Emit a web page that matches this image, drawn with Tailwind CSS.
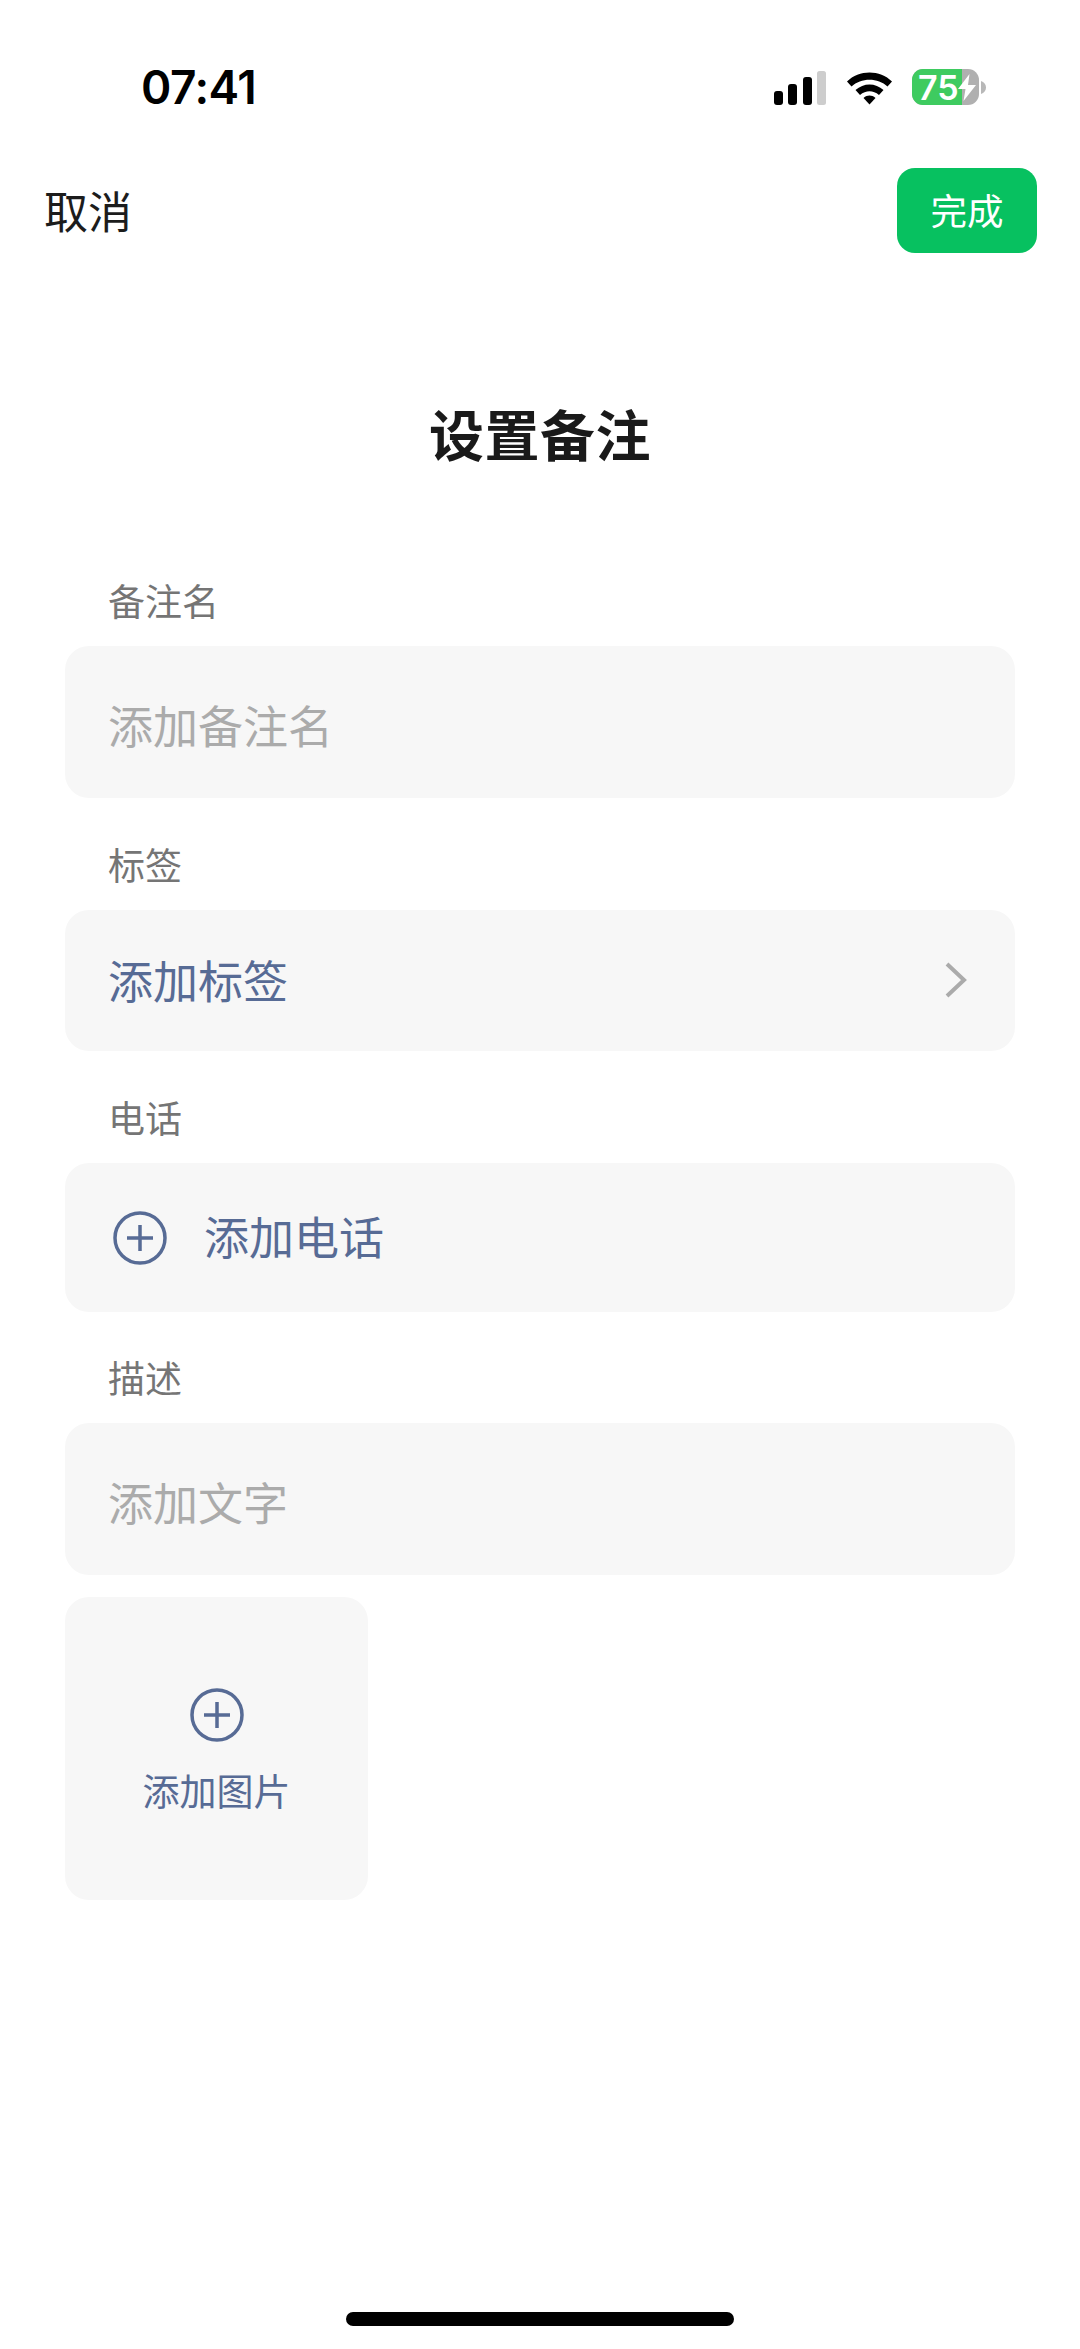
<!DOCTYPE html>
<html lang="zh">
<head>
<meta charset="utf-8">
<script src="https://cdn.jsdelivr.net/npm/@tailwindcss/browser@4"></script>
</head>
<body class="bg-white">
<div class="relative w-[1080px] h-[2349px] overflow-hidden bg-white font-['Noto_Sans_CJK_SC','Noto_Sans',sans-serif]">
  <!-- status bar -->
  <div class="relative h-[168px]">
    <div class="absolute left-[141px] top-[59px] font-['Inter',sans-serif] font-semibold text-[46px] leading-[56px] tracking-[-0.5px] text-black">07:41</div>
    <svg class="absolute left-[774px] top-[70px]" width="54" height="36" viewBox="0 0 54 36">
      <rect x="0" y="21" width="9" height="14" rx="3" fill="#000"/>
      <rect x="14" y="14" width="9" height="21" rx="3" fill="#000"/>
      <rect x="29" y="7" width="9" height="28" rx="3" fill="#000"/>
      <rect x="43" y="1" width="9" height="34" rx="2.5" fill="#cdcdcd"/>
    </svg>
    <svg class="absolute left-[846px] top-[70px]" width="47" height="36" viewBox="0 0 47 36">
      <path d="M1 11.5 C13 -0.5 34 -0.5 46 11.5 L41.5 16.5 C32 7.5 15 7.5 5.5 16.5 Z" fill="#000"/>
      <path d="M9.5 20 C17.5 12.5 29.5 12.5 37.5 20 L33 25 C27 20 20 20 14 25 Z" fill="#000"/>
      <path d="M17.5 28 C21.5 24.8 25.5 24.8 29.5 28 L23.5 34.5 Z" fill="#000"/>
    </svg>
    <div class="absolute left-[912px] top-[69px] w-[67px] h-[36px] rounded-[11px] overflow-hidden bg-[#b0b0b0]">
      <div class="h-full w-[50px] bg-[#3ecb60]"></div>
    </div>
    <div class="absolute left-[918px] top-[70px] h-[36px] font-['Inter',sans-serif] font-semibold text-[34px] leading-[36px] text-white">75</div>
    <svg class="absolute left-[957px] top-[74px]" width="20" height="27" viewBox="0 0 20 27">
      <path d="M12.5 0 L1 15 H8.5 L6.5 27 L19 11 H11 Z" fill="#fff"/>
    </svg>
    <svg class="absolute left-[981px] top-[81px]" width="5" height="13" viewBox="0 0 5 13">
      <path d="M0 0 C3 1 5 3.500 5 6.500 C5 9.500 3 12 0 13 Z" fill="#b8b8b8"/>
    </svg>
  </div>

  <!-- nav -->
  <div class="flex items-center justify-between h-[85px] pl-[44px] pr-[43px]">
    <div class="text-[44px] leading-[83px] text-[#1c1c1c]">取消</div>
    <div class="flex items-center justify-center w-[140px] h-[85px] rounded-[18px] bg-[#07c160] text-white text-[36.500px]">完成</div>
  </div>

  <!-- title -->
  <h1 class="mt-[139px] h-[80px] text-center text-[55px] leading-[80px] font-bold tracking-[0.5px] text-[#1a1a1a]">设置备注</h1>

  <!-- form -->
  <div class="mt-[86px] px-[65px]">
    <div class="h-[88px] pl-[43px] text-[37px] leading-[84px] text-[#757575]">备注名</div>
    <div class="flex items-center h-[152px] pl-[43px] pt-[6px] rounded-[24px] bg-[#f7f7f7] text-[45px] text-[#ababab]">添加备注名</div>

    <div class="mt-[24px] h-[88px] pl-[43px] text-[37px] leading-[84px] text-[#757575]">标签</div>
    <div class="flex items-center justify-between h-[141px] pl-[43px] pr-[48px] pb-[2px] rounded-[24px] bg-[#f7f7f7] text-[45px] text-[#576b95]">
      <span>添加标签</span>
      <svg width="22" height="36" viewBox="0 0 22 36" fill="none" stroke="#ababab" stroke-width="4"><path d="M2 2 L19 18 L2 34"/></svg>
    </div>

    <div class="mt-[24px] h-[88px] pl-[43px] text-[37px] leading-[84px] text-[#757575]">电话</div>
    <div class="flex items-center h-[149px] pl-[48px] rounded-[24px] bg-[#f7f7f7] text-[45px] text-[#576b95]">
      <svg width="54" height="54" viewBox="0 0 54 54" fill="none" stroke="#576b95" stroke-width="3.500"><circle cx="27" cy="27" r="25"/><path d="M14 27 H40 M27 14 V40"/></svg>
      <span class="ml-[37px] pb-[3px]">添加电话</span>
    </div>

    <div class="mt-[23px] h-[88px] pl-[43px] text-[37px] leading-[84px] text-[#757575]">描述</div>
    <div class="flex items-center h-[152px] pl-[43px] pt-[6px] rounded-[24px] bg-[#f7f7f7] text-[45px] text-[#ababab]">添加文字</div>

    <div class="mt-[22px] flex flex-col items-center w-[303px] h-[303px] pt-[91px] rounded-[24px] bg-[#f7f7f7]">
      <svg width="54" height="54" viewBox="0 0 54 54" fill="none" stroke="#576b95" stroke-width="3.500"><circle cx="27" cy="27" r="25"/><path d="M14 27 H40 M27 14 V40"/></svg>
      <div class="mt-[22px] text-[37px] leading-[52px] text-[#576b95]">添加图片</div>
    </div>
  </div>

  <!-- home indicator -->
  <div class="absolute left-[346px] bottom-[23px] w-[388px] h-[14px] rounded-full bg-black"></div>
</div>
</body>
</html>
